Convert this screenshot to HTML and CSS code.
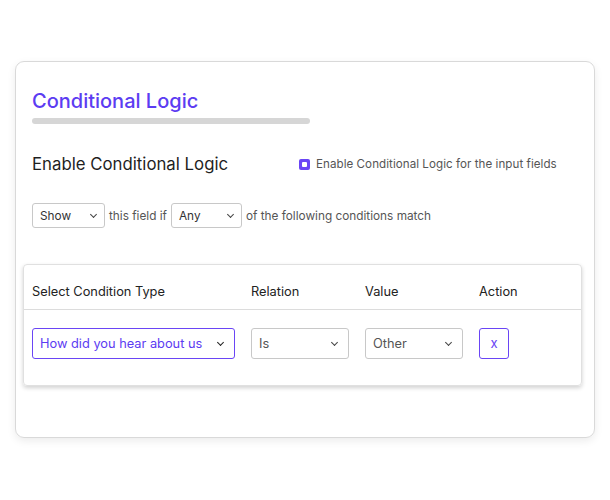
FILE: index.html
```html
<!DOCTYPE html>
<html>
<head>
<meta charset="utf-8">
<link rel="stylesheet" href="styles.css">
</head>
<body>
<div class="card">
  <h1 class="title">Conditional Logic</h1>
  <div class="bar"></div>
  <div class="enable-row">
    <div class="enable-label">Enable Conditional Logic</div>
    <label class="check"><span class="box"></span>Enable Conditional Logic for the input fields</label>
  </div>
  <div class="rule-row">
    <div class="sel sel-small sel-show">Show <span class="chev"></span></div>
    <span class="txt">this field if</span>
    <div class="sel sel-small sel-any">Any <span class="chev"></span></div>
    <span class="txt">of the following conditions match</span>
  </div>
  <div class="table">
    <div class="thead">
      <div class="c c1">Select Condition Type</div>
      <div class="c c2">Relation</div>
      <div class="c c3">Value</div>
      <div class="c c4">Action</div>
    </div>
    <div class="trow">
      <div class="c c1"><div class="sel sel-big active">How did you hear about us <span class="chev dark"></span></div></div>
      <div class="c c2"><div class="sel sel-big sel-rel">Is <span class="chev"></span></div></div>
      <div class="c c3"><div class="sel sel-big sel-val">Other <span class="chev"></span></div></div>
      <div class="c c4"><div class="xbtn">x</div></div>
    </div>
  </div>
</div>
</body>
</html>
```
FILE: styles.css
```css
* { box-sizing: border-box; }
html, body { margin: 0; padding: 0; background: #fff; }
body {
  font-family: Inter, "Noto Sans", sans-serif;
  color: #222;
  width: 610px;
  height: 500px;
  padding-top: 61px;
  padding-left: 15px;
}
.card {
  width: 580px;
  height: 377px;
  border: 1px solid #d9d9d9;
  border-radius: 9px;
  box-shadow: 0 3px 8px rgba(0,0,0,0.08);
  padding: 26px 0 0 16px;
  position: relative;
}
.title {
  margin: 0;
  font-size: 20px;
  font-weight: 500;
  color: #5c3cf2;
  line-height: 26px;
  letter-spacing: 0;
}
.bar {
  margin-top: 4px;
  width: 278px;
  height: 6px;
  border-radius: 3px;
  background: #d6d6d6;
}
.enable-row {
  display: flex;
  align-items: center;
  margin-top: 29px;
  height: 22px;
}
.enable-label {
  font-size: 16.8px;
  color: #1f1f1f;
  width: 267px;
  letter-spacing: 0;
}
.check {
  display: flex;
  align-items: center;
  font-size: 11.6px;
  color: #555;
  letter-spacing: 0.05px;
}
.box {
  width: 11px;
  height: 11px;
  border-radius: 2px;
  background: #6a45f5;
  margin-right: 6px;
  position: relative;
}
.box::after {
  content: "";
  position: absolute;
  left: 3px; top: 3px;
  width: 5px; height: 5px;
  background: #fff;
  border-radius: 1px;
}
.rule-row {
  display: flex;
  align-items: center;
  margin-top: 28px;
  height: 25px;
  font-size: 11.8px;
}
.txt { color: #555; margin: 0 4px 0 4px; }
.sel {
  display: flex;
  align-items: center;
  justify-content: space-between;
  border: 1px solid #c8c8c8;
  border-radius: 3px;
  color: #333;
  background: #fff;
}
.sel-small {
  height: 25px;
  padding: 0 6px 0 7px;
  font-size: 11.8px;
}
.sel-show { width: 73px; }
.sel-any { width: 71px; }
.chev {
  width: 5px;
  height: 5px;
  border-right: 1.3px solid #444;
  border-bottom: 1.3px solid #444;
  transform: rotate(45deg);
  margin-top: -3px;
  margin-right: 2px;
}
.chev.dark { border-color: #222; }
.table {
  margin-top: 36px;
  margin-left: -9px;
  width: 559px;
  height: 122px;
  border: 1px solid #e0e0e0;
  border-radius: 4px;
  box-shadow: 0 2px 4px rgba(0,0,0,0.18);
}
.thead {
  display: flex;
  align-items: flex-start;
  height: 45px;
  border-bottom: 1px solid #dcdcdc;
  font-size: 12.8px;
  color: #222;
  padding-left: 8px;
  padding-top: 19px;
}
.trow {
  display: flex;
  align-items: flex-start;
  padding-top: 18px;
  padding-left: 8px;
}
.c1 { width: 219px; }
.c2 { width: 114px; }
.c3 { width: 114px; }
.c4 { width: 60px; }
.sel-big {
  height: 31px;
  font-size: 12.8px;
  padding: 0 9px 0 7px;
  color: #555;
}
.sel-big.active {
  width: 203px;
  border-color: #6a45f5;
  color: #5c3cf2;
}
.sel-rel { width: 98px; }
.sel-val { width: 98px; }
.xbtn {
  width: 30px;
  height: 31px;
  border: 1px solid #6a45f5;
  border-radius: 3px;
  color: #6a45f5;
  font-size: 13px;
  display: flex;
  align-items: center;
  justify-content: center;
  padding-bottom: 2px;
}
```
